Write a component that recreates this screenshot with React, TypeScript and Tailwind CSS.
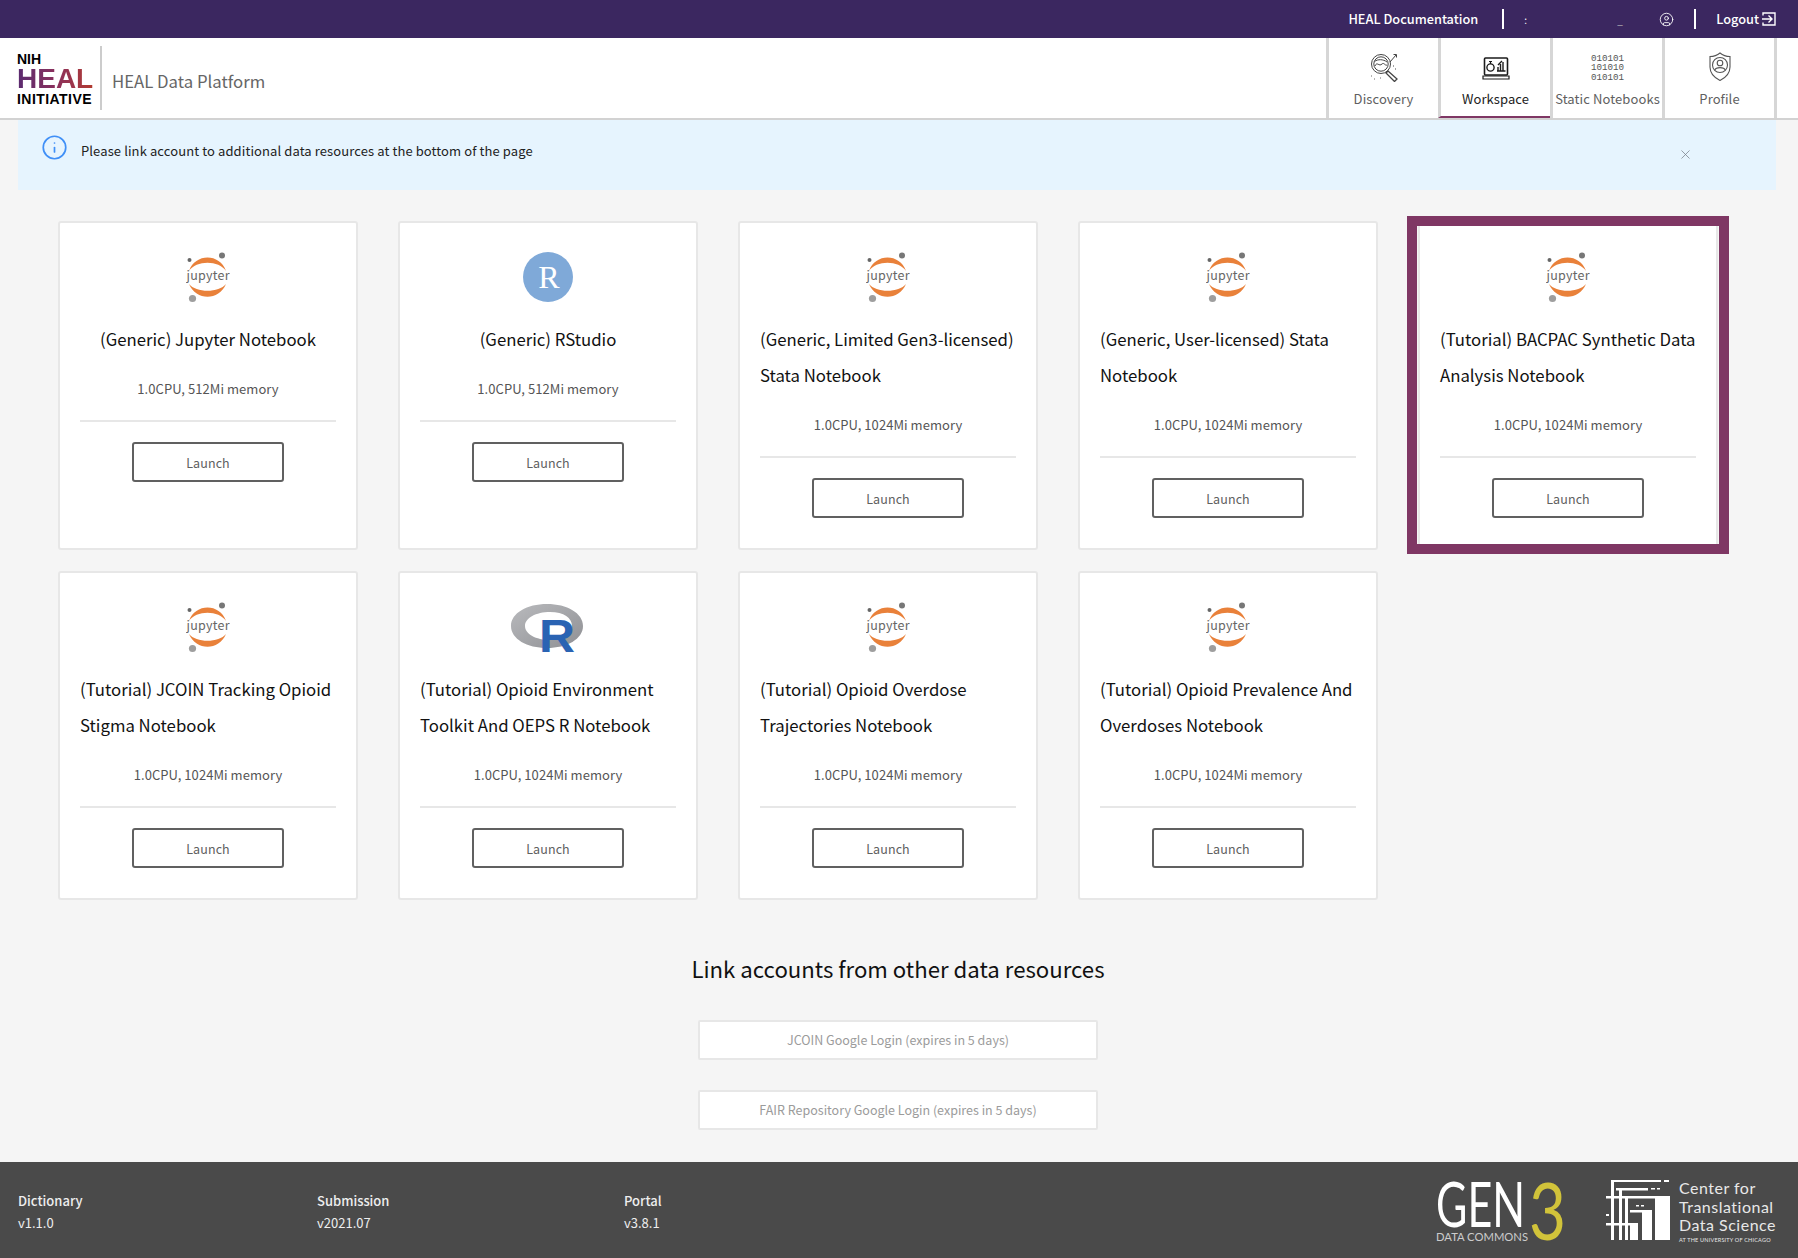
import { CircleUser, Info, X } from "lucide-react";

interface Workspace {
    title: string;
    spec: string;
    logo: "jupyter" | "rstudio" | "r";
    selected?: boolean;
}

const workspaces: Workspace[] = [
    { title: "(Generic) Jupyter Notebook", spec: "1.0CPU, 512Mi memory", logo: "jupyter" },
    { title: "(Generic) RStudio", spec: "1.0CPU, 512Mi memory", logo: "rstudio" },
    { title: "(Generic, Limited Gen3-licensed) Stata Notebook", spec: "1.0CPU, 1024Mi memory", logo: "jupyter" },
    { title: "(Generic, User-licensed) Stata Notebook", spec: "1.0CPU, 1024Mi memory", logo: "jupyter" },
    { title: "(Tutorial) BACPAC Synthetic Data Analysis Notebook", spec: "1.0CPU, 1024Mi memory", logo: "jupyter", selected: true },
    { title: "(Tutorial) JCOIN Tracking Opioid Stigma Notebook", spec: "1.0CPU, 1024Mi memory", logo: "jupyter" },
    { title: "(Tutorial) Opioid Environment Toolkit And OEPS R Notebook", spec: "1.0CPU, 1024Mi memory", logo: "r" },
    { title: "(Tutorial) Opioid Overdose Trajectories Notebook", spec: "1.0CPU, 1024Mi memory", logo: "jupyter" },
    { title: "(Tutorial) Opioid Prevalence And Overdoses Notebook", spec: "1.0CPU, 1024Mi memory", logo: "jupyter" },
];

function JupyterLogo() {
    return (
        <svg width="44" height="52" viewBox="0 0 44 52">
            <path d="M3 19 C9 1 34 1 40 19 C33 8 10 8 3 19 Z" fill="#e9813a" />
            <path d="M3 32 C10 49 33 49 40 32 C33 41 10 41 3 32 Z" fill="#e9813a" />
            <circle cx="36" cy="3.5" r="3" fill="#777777" />
            <circle cx="3.5" cy="8" r="2" fill="#666666" />
            <circle cx="6.5" cy="46.5" r="3.6" fill="#9e9e9e" />
            <text x="0.5" y="28" fontSize="12.5" fill="#666666" textLength="43">
                jupyter
            </text>
        </svg>
    );
}

function RStudioLogo() {
    return (
        <div className="mb-[2px] flex h-[50px] w-[50px] items-center justify-center rounded-full bg-[#7fa9d8] pl-[2px] font-['Liberation_Serif',serif] text-[32px] leading-none text-white">
            R
        </div>
    );
}

function RLogo() {
    return (
        <svg width="74" height="52" viewBox="0 0 74 52" className="mr-[2px]">
            <defs>
                <linearGradient id="ring" x1="0" y1="0" x2="1" y2="1">
                    <stop offset="0" stopColor="#b9babd" />
                    <stop offset="1" stopColor="#8f9094" />
                </linearGradient>
            </defs>
            <path
                fillRule="evenodd"
                d="M37 2 C57 2 73 11 73 24 C73 37 57 46 37 46 C17 46 1 37 1 24 C1 11 17 2 37 2 Z M40 10 C26 10 15 16 15 24 C15 32 26 38 40 38 C54 38 62 32 62 24 C62 16 54 10 40 10 Z"
                fill="url(#ring)"
            />
            <text x="29" y="50" fontFamily="Liberation Sans" fontWeight="700" fontSize="46" fill="#2a63b3" textLength="36" lengthAdjust="spacingAndGlyphs">
                R
            </text>
        </svg>
    );
}

function WorkspaceCard({ title, spec, logo, selected }: Workspace) {
    return (
        <div className="relative flex h-[329px] flex-col rounded-[3px] border-2 border-[#e7e7e7] bg-white px-[20px] pt-[29px]">
            {selected && <div className="absolute -inset-x-[13px] -top-[7px] -bottom-[6px] border-[10px] border-[#7f3764]" />}
            <div className="flex h-[52px] items-center justify-center">
                {logo === "jupyter" && <JupyterLogo />}
                {logo === "rstudio" && <RStudioLogo />}
                {logo === "r" && <RLogo />}
            </div>
            <h3 className="mx-auto mt-[17px] w-fit text-[16.75px] leading-[36px] font-normal text-[#111111]">{title}</h3>
            <p className="mt-[22px] text-center text-[13px] leading-[20px] tracking-[0.05px] text-[#555555]">{spec}</p>
            <div className="mt-[21px] h-[2px] bg-[#e7e7e7]" />
            <button className="mx-auto mt-[20px] h-[40px] w-[152px] rounded-[3px] border-2 border-[#606060] pt-[2px] text-[12.5px] tracking-[0.1px] text-[#606060]">
                Launch
            </button>
        </div>
    );
}

function DiscoveryIcon() {
    return (
        <svg width="30" height="30" viewBox="0 0 30 30" fill="none" stroke="#444444" strokeWidth="1">
            <circle cx="12" cy="12" r="9.5" />
            <circle cx="12" cy="12" r="7.2" />
            <path d="M6 14 C8 9 10 15 13 12 C15 10 16 14 18 13" />
            <path d="M5.5 9.5 C9 7 14 7 18 10" />
            <path d="M19 19 L28 27 L25.5 29.5 L17 21 Z" strokeWidth="1.3" />
            <path d="M21 10 L27 3 M24.5 2.5 L27.5 2.5 L27.5 5.5" />
            <path d="M24 14 h1 M26 17 h1 M2 24 h.8 M5 27 h.8 M11 26 h.8" strokeDasharray="1 2" />
        </svg>
    );
}

function WorkspaceIcon() {
    return (
        <svg width="28" height="26" viewBox="0 0 28 26" fill="none" stroke="#1b1b1b" strokeWidth="1.2">
            <rect x="2.5" y="2" width="23" height="17" rx="1" strokeWidth="1.6" />
            <path d="M1 20 H27 V23 H1 Z" />
            <circle cx="8.5" cy="11.5" r="3.6" strokeWidth="1.4" />
            <path d="M8.5 8 V5.5 M7 5.5 H10" />
            <path d="M15 15 H23.5 M16 15 V11 M18.5 15 V8 M21 15 V6 M16 9 L20 5" strokeWidth="1.4" />
        </svg>
    );
}

function ProfileIcon() {
    return (
        <svg width="24" height="30" viewBox="0 0 24 30" fill="none" stroke="#555555" strokeWidth="1.1">
            <path d="M12 1 C9 3.5 5 4.5 2 4.5 V15 C2 22 7 26 12 28.5 C17 26 22 22 22 15 V4.5 C19 4.5 15 3.5 12 1 Z" />
            <circle cx="12" cy="13" r="7.5" />
            <circle cx="12" cy="11" r="2.8" />
            <path d="M6.8 18 C8 14.8 16 14.8 17.2 18" />
        </svg>
    );
}

function LogoutIcon() {
    return (
        <svg width="14" height="14" viewBox="0 0 14 14" fill="none" stroke="white" strokeWidth="1.4">
            <path d="M1 3.5 V1 H13 V13 H1 V10.5" />
            <path d="M0 7 H9.5 M6.5 3.5 L10 7 L6.5 10.5" />
        </svg>
    );
}

function NavTab({ label, icon, active, last }: { label: string; icon: React.ReactNode; active?: boolean; last?: boolean }) {
    return (
        <div
            className={`flex h-full flex-col items-center border-l-[3px] border-[#d6d6d6] ${last ? "w-[115px] border-r-[3px]" : "w-[112px]"} ${
                active ? "border-b-[2px] border-b-[#7f3764] text-[#222222]" : "text-[#606060]"
            }`}
        >
            <div className="flex h-[45px] items-end justify-center pb-[1px]">{icon}</div>
            <span className="mt-[6px] text-[13px] leading-[20px] tracking-[0.1px] whitespace-nowrap">{label}</span>
        </div>
    );
}

function CtdsMark() {
    return (
        <svg width="64" height="60" viewBox="0 0 64 60" fill="white">
            <rect x="5" y="0" width="3" height="60" />
            <rect x="5" y="0" width="50" height="2" />
            <rect x="58" y="0" width="5" height="2" />
            <rect x="10" y="8" width="32" height="2.5" />
            <rect x="45" y="8" width="4" height="1.5" />
            <rect x="51" y="8" width="3" height="1.5" />
            <rect x="13" y="8" width="3" height="52" />
            <rect x="0" y="16" width="64" height="2.5" />
            <rect x="19" y="16" width="3" height="44" />
            <rect x="49" y="16" width="15" height="44" />
            <rect x="30" y="25" width="3" height="1.5" />
            <rect x="35" y="25" width="3" height="1.5" />
            <rect x="24" y="30" width="20" height="2.5" />
            <rect x="36" y="30" width="10" height="30" />
            <rect x="0" y="34" width="3" height="2" />
            <rect x="0" y="43" width="30" height="2.5" />
            <rect x="24" y="43" width="8" height="17" />
        </svg>
    );
}

export default function App() {
    return (
        <div className="flex min-h-screen flex-col bg-[#f5f5f5] font-['Noto_Sans_CJK_SC',sans-serif]">
            {/* Top bar */}
            <div className="flex h-[38px] items-center justify-end bg-[#3b2760] pr-[22px] text-[12.75px] text-white">
                <span className="font-medium">HEAL Documentation</span>
                <div className="mr-[20px] ml-[24px] h-[20px] w-[2px] bg-white" />
                <span className="w-[93px] text-[10px]">:</span>
                <span className="w-[42px] text-[10px] text-[#bbbbbb]">_</span>
                <CircleUser size={15} strokeWidth={1.4} />
                <div className="mr-[20px] ml-[20px] h-[20px] w-[2px] bg-white" />
                <span className="mr-[3px] font-medium">Logout</span>
                <LogoutIcon />
            </div>

            {/* Header */}
            <header className="flex h-[82px] items-stretch border-b-2 border-[#d2d2d2] bg-white">
                <div className="flex flex-1 items-center pl-[17px]">
                    <div className="mt-[2px] flex w-[76px] flex-col font-['Liberation_Sans',sans-serif] font-bold text-black">
                        <span className="text-[14px] leading-[20px]">NIH</span>
                        <span className="bg-gradient-to-r from-[#5a2a70] via-[#8a2f5c] to-[#b23a2e] bg-clip-text text-[28px] leading-[20px] text-transparent">
                            HEAL
                        </span>
                        <span className="text-[14px] leading-[21px] tracking-[0.45px]">INITIATIVE</span>
                    </div>
                    <div className="ml-[7px] h-[64px] w-[2px] bg-[#cccccc]" />
                    <span className="mt-[7px] ml-[10px] text-[16.75px] text-[#666666]">HEAL Data Platform</span>
                </div>
                <nav className="mr-[21px] flex h-full">
                    <NavTab label="Discovery" icon={<DiscoveryIcon />} />
                    <NavTab label="Workspace" icon={<WorkspaceIcon />} active />
                    <NavTab
                        label="Static Notebooks"
                        icon={
                            <div className="text-center font-['Liberation_Mono',monospace] text-[9.2px] leading-[9.5px] text-[#555555]">
                                010101
                                <br />
                                101010
                                <br />
                                010101
                            </div>
                        }
                    />
                    <NavTab label="Profile" icon={<ProfileIcon />} last />
                </nav>
            </header>

            {/* Notice */}
            <div className="mr-[22px] ml-[18px] flex h-[70px] items-start bg-[#e6f4fe] pt-[14px] pl-[23px]">
                <Info size={27} strokeWidth={1.5} className="text-[#3f8ff7]" />
                <span className="mt-[7px] ml-[13px] text-[13px] leading-[20px] tracking-[0.1px] text-[#222222]">
                    Please link account to additional data resources at the bottom of the page
                </span>
                <X size={15} strokeWidth={1.2} className="mt-[13px] mr-[83px] ml-auto text-[#777f88]" />
            </div>

            {/* Workspace options */}
            <main className="flex-1">
                <div className="mt-[31px] ml-[58px] grid grid-cols-[repeat(5,300px)] gap-x-[40px] gap-y-[21px]">
                    {workspaces.map((w) => (
                        <WorkspaceCard key={w.title} {...w} />
                    ))}
                </div>

                <div className="mt-[50px] flex flex-col items-center pr-[2px]">
                    <h2 className="text-[22.2px] leading-[36px] font-normal text-[#111111]">Link accounts from other data resources</h2>
                    <button className="mt-[34px] h-[40px] w-[400px] rounded-[2px] border-2 border-[#e7e7e7] bg-white pt-[1px] text-[12.5px] text-[#9b9b9b]">
                        JCOIN Google Login (expires in 5 days)
                    </button>
                    <button className="mt-[30px] h-[40px] w-[400px] rounded-[2px] border-2 border-[#e7e7e7] bg-white pt-[1px] text-[12.5px] text-[#9b9b9b]">
                        FAIR Repository Google Login (expires in 5 days)
                    </button>
                </div>
            </main>

            {/* Footer */}
            <footer className="flex h-[96px] items-center bg-[#4a4a4a] pr-[22px] pl-[18px] text-[13px] leading-[22px] text-[#eeeeee]">
                <div className="mt-[3px] w-[299px]">
                    <div className="font-medium">Dictionary</div>
                    <div>v1.1.0</div>
                </div>
                <div className="mt-[3px] w-[307px]">
                    <div className="font-medium">Submission</div>
                    <div>v2021.07</div>
                </div>
                <div className="mt-[3px]">
                    <div className="font-medium">Portal</div>
                    <div>v3.8.1</div>
                </div>

                <svg width="132" height="66" viewBox="0 0 132 66" className="ml-auto font-['Lato',sans-serif]">
                    <text x="2" y="50" fontSize="62" fontWeight="400" fill="white" textLength="89" lengthAdjust="spacingAndGlyphs">
                        GEN
                    </text>
                    <text x="95" y="63" fontSize="80" fontWeight="400" fill="#d1c33a" textLength="37" lengthAdjust="spacingAndGlyphs">
                        3
                    </text>
                    <text x="2" y="64" fontSize="12" fill="#cccccc" textLength="92" lengthAdjust="spacingAndGlyphs">
                        DATA COMMONS
                    </text>
                </svg>
                <div className="ml-[40px] flex">
                    <CtdsMark />
                </div>
                <div className="mt-[3px] ml-[9px] flex w-[97px] flex-col font-['Lato',sans-serif] text-[16px] leading-[18.5px] tracking-[0.5px] whitespace-nowrap text-[#e8e8e8]">
                    <span>Center for</span>
                    <span>Translational</span>
                    <span>Data Science</span>
                    <span className="mt-[2px] text-[5.5px] leading-[7px] tracking-[0.2px]">AT THE UNIVERSITY OF CHICAGO</span>
                </div>
            </footer>
        </div>
    );
}
